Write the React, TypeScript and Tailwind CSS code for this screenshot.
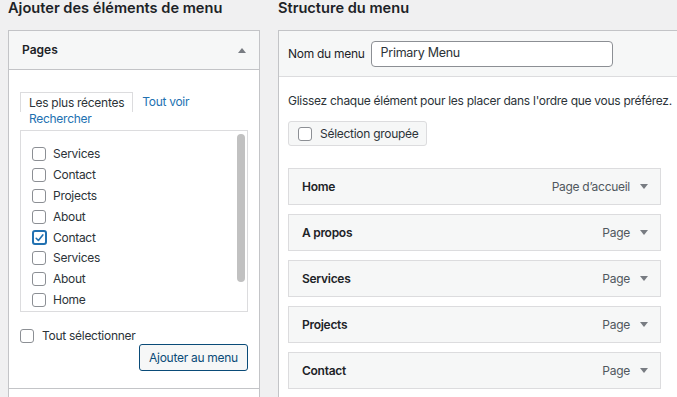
import React from "react";

const font = { fontFamily: "Inter, 'Liberation Sans', sans-serif" };

function Box({ checked = false }: { checked?: boolean }) {
  return checked ? (
    <span className="-ml-[0.5px] -mr-[0.5px] flex h-[15px] w-[15px] shrink-0 items-center justify-center rounded-[3px] border-2 border-[#2271b1] bg-white">
      <svg viewBox="0 0 20 20" className="h-[14px] w-[14px]">
        <path d="M4 10.5l4 4 8-10" fill="none" stroke="#2271b1" strokeWidth="3" strokeLinecap="round" strokeLinejoin="round" />
      </svg>
    </span>
  ) : (
    <span className="block h-[14px] w-[14px] shrink-0 rounded-[3px] border border-[#8c8f94] bg-white" />
  );
}

const pages: [string, boolean][] = [
  ["Services", false],
  ["Contact", false],
  ["Projects", false],
  ["About", false],
  ["Contact", true],
  ["Services", false],
  ["About", false],
  ["Home", false],
];

const items: [string, string][] = [
  ["Home", "Page d’accueil"],
  ["A propos", "Page"],
  ["Services", "Page"],
  ["Projects", "Page"],
  ["Contact", "Page"],
];

export default function App() {
  return (
    <div style={font} className="flex h-[397px] w-[677px] gap-[18px] overflow-hidden bg-[#f0f0f1] pl-[8px] text-[12px] tracking-[-0.28px] text-[#2c3338]">
      {/* Left column */}
      <div className="flex w-[252px] shrink-0 flex-col">
        <h2 className="h-[30px] whitespace-nowrap pt-[0px] text-[14.6px] font-semibold leading-[17px] tracking-normal text-[#1d2327]">Ajouter des éléments de menu</h2>
        <div className="flex flex-1 flex-col border border-b-0 border-[#c3c4c7] bg-white">
          <div className="flex h-[39px] items-center justify-between border-b border-[#c3c4c7] bg-[#f6f7f7] pl-[13px] pr-[13px]">
            <span className="text-[12px] font-semibold tracking-normal text-[#1d2327]">Pages</span>
            <svg width="8" height="5" viewBox="0 0 8 5"><path d="M4 0L8 5H0z" fill="#787c82" /></svg>
          </div>
          <div className="px-[11px] pt-[22px]">
            <div className="flex items-start">
              <div className="h-[20px] whitespace-nowrap border border-b-0 border-[#dcdcde] px-[8px] leading-[20px] text-[#2c3338]">Les plus récentes</div>
              <div className="whitespace-nowrap pl-[9px] leading-[20px] text-[#2271b1]">Tout voir</div>
            </div>
            <div className="pl-[9px] leading-[14px] text-[#2271b1]">Rechercher</div>
            <div className="mt-[4px] flex h-[182px] border border-[#dcdcde] bg-white">
              <div className="flex-1 pl-[11px] pt-[13px]">
                {pages.map(([label, checked], i) => (
                  <div key={i} className="flex h-[20.8px] items-center gap-[7px]">
                    <Box checked={checked} />
                    <span className="text-[#2c3338]">{label}</span>
                  </div>
                ))}
              </div>
              <div className="mr-[2px] mt-[3px] h-[148px] w-[8px] rounded-full bg-[#c1c1c1]" />
            </div>
            <div className="mt-[17px] flex h-[14px] items-center gap-[8px]">
              <Box />
              <span className="whitespace-nowrap">Tout sélectionner</span>
            </div>
            <div className="mt-[1px] flex justify-end">
              <button className="h-[27px] w-[109px] whitespace-nowrap rounded-[3px] border border-[#0a4b78] bg-[#f6f7f7] text-[12px] text-[#0a4b78]">Ajouter au menu</button>
            </div>
          </div>
          <div className="mt-[17px] border-t border-[#c3c4c7]" />
        </div>
      </div>

      {/* Right column */}
      <div className="flex flex-1 flex-col">
        <h2 className="h-[30px] whitespace-nowrap text-[14.6px] font-semibold leading-[17px] tracking-normal text-[#1d2327]">Structure du menu</h2>
        <div className="flex-1 border border-r-0 border-b-0 border-[#c3c4c7] bg-white">
          <div className="flex h-[46px] items-center gap-[6px] border-b border-[#dcdcde] bg-[#f6f7f7] pl-[9px]">
            <span className="whitespace-nowrap text-[#1d2327]">Nom du menu</span>
            <div className="flex h-[26px] w-[242px] items-center rounded-[4px] border border-[#8c8f94] bg-white pl-[9px] text-[12.5px] text-[#2c3338]">Primary Menu</div>
          </div>
          <div className="pl-[9px] pr-[2px]">
            <p className="mt-[15px] whitespace-nowrap leading-[18px] text-[#2c3338]">Glissez chaque élément pour les placer dans l'ordre que vous préférez.</p>
            <div className="mt-[11px] flex h-[25px] w-[139px] items-center gap-[8px] rounded-[3px] border border-[#dcdcde] bg-[#f6f7f7] pl-[9px]">
              <Box />
              <span className="whitespace-nowrap">Sélection groupée</span>
            </div>
            <div className="mt-[22px] flex w-[373px] flex-col gap-[9px]">
              {items.map(([t, k], i) => (
                <div key={i} className="flex h-[37px] items-center justify-between border border-[#dcdcde] bg-[#f6f7f7] pl-[13px] pr-[12px]">
                  <span className="font-semibold text-[#1d2327]">{t}</span>
                  <span className="flex items-center gap-[10px] whitespace-nowrap text-[#50575e]">
                    {k}
                    <svg width="8" height="5" viewBox="0 0 8 5"><path d="M0 0H8L4 5z" fill="#787c82" /></svg>
                  </span>
                </div>
              ))}
            </div>
          </div>
        </div>
      </div>
    </div>
  );
}
